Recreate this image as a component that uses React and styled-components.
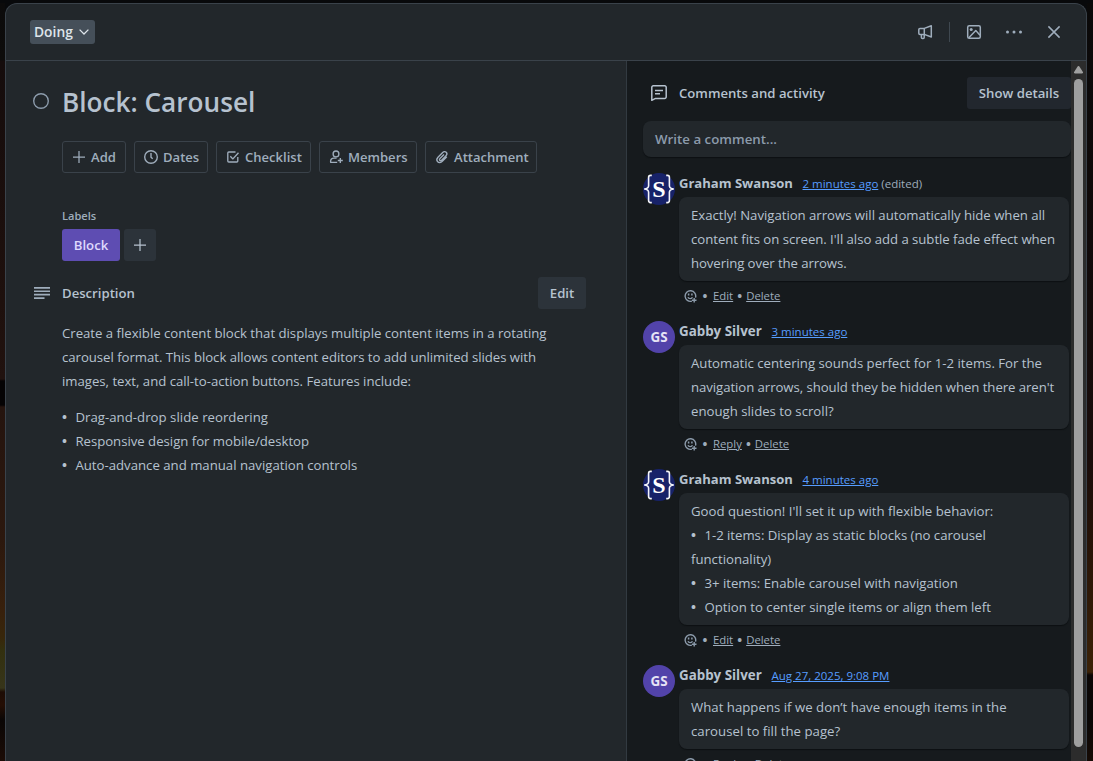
import React from "react";
import styled, { createGlobalStyle } from "styled-components";

const c = {
  surface: "#22272b",
  sunken: "#161a1d",
  border: "#3a424a",
  text: "#b6c2cf",
  subtle: "#9fadbc",
  muted: "#8c9bab",
  button: "#2c333a",
  link: "#579dff",
};

const GlobalStyle = createGlobalStyle`
  * { box-sizing: border-box; }
  body {
    margin: 0;
    overflow: hidden;
    color: ${c.text};
    font: 400 13.2px/20px "Open Sans", "Noto Sans", sans-serif;
  }
  svg { display: block; flex: none; }
`;

const Board = styled.div`
  height: 761px;
  padding: 3px 6px 0 5px;
  background:
    linear-gradient(#08090b, #08090b) 0 0 / 100% 3px no-repeat,
    linear-gradient(#0c0b0b 0, #0d0c0b 60px, #150c0c 61px, #1e100d 300px, #21120f 379px, #050304 381px, #050304 405px, #25140e 407px, #2c180e 540px, #38200c 610px, #38270b 638px, #33300f 650px, #37351a 688px, #1d0c05 692px, #250e04 705px, #0a0605 720px, #1c0c06 761px) 0 0 / 5px 100% no-repeat,
    linear-gradient(#0a0909 0, #0c0a0a 60px, #0f0909 180px, #130b0b 300px, #1a0c0a 460px, #2a1507 560px, #3c2207 672px, #0b0605 675px, #0a0605 720px, #160b05 761px) 100% 0 / 6px 100% no-repeat,
    #08090b;
`;

const Modal = styled.section`
  display: flex;
  flex-direction: column;
  height: 758px;
  overflow: hidden;
  border: 1px solid ${c.border};
  border-bottom: 0;
  border-radius: 12px 12px 0 0;
  background: ${c.surface};
`;

const Header = styled.header`
  display: flex;
  flex: none;
  align-items: center;
  justify-content: space-between;
  height: 57px;
  padding: 0 12px 0 24px;
  border-bottom: 1px solid ${c.border};
`;

const ListButton = styled.button`
  display: flex;
  align-items: center;
  gap: 6px;
  width: 65px;
  height: 24px;
  padding: 0 5px 0 4px;
  border: 0;
  border-radius: 3px;
  background: #454f59;
  color: #dee4ea;
  font: 600 13.8px/20px "Open Sans", sans-serif;
`;

const HeaderActions = styled.div`
  display: flex;
  align-items: center;
  color: ${c.subtle};
`;

const IconButton = styled.button`
  display: grid;
  place-items: center;
  width: ${(p) => p.$w || 40}px;
  height: 32px;
  padding: 0;
  border: 0;
  background: none;
  color: inherit;
`;

const Divider = styled.span`
  width: 1px;
  height: 20px;
  margin-right: 4px;
  background: #3f4850;
`;

const Columns = styled.div`
  display: flex;
  flex: 1;
  min-height: 0;
`;

const Main = styled.main`
  flex: none;
  width: 621px;
  padding: 25px 40px 0 26px;
  border-right: 1px solid #323a41;
`;

const IconRow = styled.div`
  display: grid;
  grid-template-columns: 18px 1fr auto;
  column-gap: 12px;
  align-items: center;
`;

const Indented = styled.div`
  padding-left: 30px;
`;

const Title = styled.h1`
  margin: 0;
  font-size: 26.2px;
  font-weight: 600;
  line-height: 32px;
`;

const ButtonRow = styled.div`
  display: flex;
  gap: 8px;
  margin-top: 23px;
`;

const OutlineButton = styled.button`
  display: flex;
  align-items: center;
  gap: ${(p) => p.$gap || 4}px;
  width: ${(p) => p.$w}px;
  height: 32px;
  padding: 0 0 0 8px;
  border: 1px solid ${c.border};
  border-radius: 3px;
  background: none;
  color: ${c.subtle};
  font: 600 13.05px/20px "Open Sans", sans-serif;
  white-space: nowrap;
`;

const LabelsHeading = styled.h2`
  margin: 35px 0 5px;
  color: ${c.subtle};
  font-size: 11.1px;
  font-weight: 600;
  line-height: 16px;
`;

const Labels = styled.div`
  display: flex;
  gap: 4px;
  margin-bottom: 16px;
`;

const Label = styled.span`
  width: 58px;
  border-radius: 3px;
  background: #5e4db2;
  color: #dfd8fd;
  font-weight: 600;
  line-height: 32px;
  text-align: center;
`;

const SolidButton = styled.button`
  display: grid;
  place-items: center;
  width: ${(p) => p.$w}px;
  height: 32px;
  padding: 0;
  border: 0;
  border-radius: 3px;
  background: ${(p) => p.$bg || c.button};
  color: ${c.text};
  font: 600 13.2px/20px "Open Sans", sans-serif;
`;

const SectionTitle = styled.h2`
  margin: 0;
  font-size: 13.15px;
  font-weight: 600;
  line-height: 20px;
`;

const Copy = styled.div`
  margin-top: 12px;
  line-height: 24px;
`;

const Line = styled.span`
  display: block;
  letter-spacing: ${(p) => p.$ls || 0}px;
  white-space: nowrap;
`;

const Bullet = styled(Line)`
  &::before {
    content: "•";
    display: inline-block;
    width: 13.4px;
    font-weight: 700;
    letter-spacing: 0;
  }
`;

const Side = styled.aside`
  flex: 1;
  min-width: 0;
  padding: 16px 0 0 16px;
  overflow: hidden;
  background: ${c.sunken};
`;

const SideHeader = styled(IconRow)`
  grid-template-columns: 16px 1fr auto;
  padding-left: 8px;
`;

const CommentInput = styled.div`
  height: 36px;
  margin: 12px 0 16px;
  padding: 8px 12px;
  border-radius: 8px;
  background: ${c.surface};
  box-shadow: 0 1px 1px #0d1013;
  color: ${c.muted};
  font-size: 13.3px;
  font-weight: 600;
`;

const Comment = styled.article`
  display: grid;
  grid-template-columns: 32px 390px;
  column-gap: 4px;
`;

const Initials = styled.span`
  width: 32px;
  height: 32px;
  border-radius: 50%;
  background: #5243aa;
  color: #e6e3f5;
  font-size: 13.4px;
  font-weight: 700;
  line-height: 32px;
  text-align: center;
`;

const Byline = styled.div`
  display: flex;
  align-items: baseline;
  height: 24px;
  color: ${c.subtle};
  font-size: 11.5px;
  white-space: pre;
`;

const Author = styled.strong`
  width: ${(p) => p.$w}px;
  color: ${c.text};
  font-size: ${(p) => p.$size}px;
  font-weight: 700;
`;

const TimeLink = styled.a`
  margin-right: 3px;
  color: ${c.link};
  text-decoration: underline;
`;

const Bubble = styled.div`
  padding: 6px 12px;
  border-radius: 8px;
  background: ${c.surface};
  box-shadow: 0 1px 1px #0d1013;
  line-height: 24px;
`;

const Actions = styled.div`
  display: flex;
  align-items: center;
  height: 20px;
  margin: 5px 0 15px;
  padding-left: 5px;
  color: ${c.subtle};
  font-size: 11.35px;
`;

const Dot = styled.span`
  width: ${(p) => p.$w}px;
  font-size: 13px;
  font-weight: 700;
  text-align: center;
`;

const ActionLink = styled.a`
  color: ${c.subtle};
  text-decoration: underline;
`;

const Scrollbar = styled.div`
  display: flex;
  flex: none;
  flex-direction: column;
  align-items: center;
  width: 15px;
  padding-top: 5px;
  background: #2c2c2c;
`;

const Thumb = styled.div`
  width: 9px;
  height: 668px;
  margin-top: 5px;
  border-radius: 5px;
  background: #9f9f9f;
`;

const Icon = ({ size = 16, w = 1.5, children }) => (
  <svg width={size} height={size} viewBox="0 0 16 16" fill="none" stroke="currentColor" strokeWidth={w} strokeLinejoin="round">
    {children}
  </svg>
);

const PlusIcon = () => <Icon w={1.25}><path d="M8 2v12M2 8h12" /></Icon>;
const ClockIcon = () => <Icon w={1.4}><circle cx="8" cy="8" r="6.3" /><path d="M8 4v4.2l1.7 1.6" /></Icon>;
const CheckIcon = () => (
  <Icon w={1.35}><path d="M10.5 3H3.8a1 1 0 0 0-1 1v8a1 1 0 0 0 1 1h8a1 1 0 0 0 1-1V8M5.3 7.3l2.6 2.6 5.6-6.2" /></Icon>
);
const MemberIcon = () => (
  <Icon w={1.35}><circle cx="8" cy="4.9" r="2.9" /><path d="M9.2 13.3H2.6v-.8c0-2.1 1.5-3.4 3.4-3.4h2.6M12.3 9v5M9.8 11.5h5" /></Icon>
);
const ClipIcon = () => (
  <Icon w={1.35}><path d="m12.8 7.8-4.5 4.6c-1.4 1.4-3.4 1.6-4.6.4-1.2-1.2-1-3.1.3-4.5l4.7-4.8c1-1 2.6-1.1 3.5-.2.9.9.8 2.4-.2 3.4l-4.4 4.5c-.6.6-1.3.7-1.8.2s-.4-1.2.2-1.8l4-4.1" /></Icon>
);

const Megaphone = () => (
  <Icon w={1.5}><path d="M7.3 4.4 14.3 1.8v11.2L7.3 10.4ZM7.3 4.4H3a1.2 1.2 0 0 0-1.2 1.2v3.6A1.2 1.2 0 0 0 3 10.4h4.3M4.4 10.4v3c0 .6.4 1 1 1h.8c.6 0 1-.4 1-1v-3" /></Icon>
);
const ImageIcon = () => (
  <Icon w={1.5}><rect x="1.7" y="1.7" width="12.6" height="12.6" rx="1.5" /><circle cx="5.2" cy="5.4" r="1.5" fill="currentColor" stroke="none" /><path d="m2.8 13.8 7-7.2 4.2 4.6" /></Icon>
);
const MoreIcon = () => (
  <Icon w={0}><g fill="currentColor"><circle cx="1.5" cy="8" r="1.5" /><circle cx="8" cy="8" r="1.5" /><circle cx="14.5" cy="8" r="1.5" /></g></Icon>
);
const CloseIcon = () => <Icon><path d="m2.4 2.4 11.2 11.2M13.6 2.4 2.4 13.6" /></Icon>;
const CommentIcon = () => (
  <Icon w={1.5}><path d="M.8 15.3V2.3A1.5 1.5 0 0 1 2.3.8h11.4a1.5 1.5 0 0 1 1.5 1.5v9.6a1.5 1.5 0 0 1-1.5 1.5H4.5ZM4 5.6h8M4 8.8h5" /></Icon>
);
const LinesIcon = () => (
  <svg width="18" height="12" viewBox="0 0 18 12" fill={c.subtle}>
    <path d="M2 0h16v1.7H2zM2 3.4h16v1.7H2zM2 6.8h16v1.7H2zM2 10.2h10.5v1.7H2z" />
  </svg>
);
const ReactIcon = () => (
  <svg width="13" height="13" viewBox="0 0 13 13" fill="none" stroke={c.muted} strokeWidth="1.4">
    <path d="M11.5 7.6A5.3 5.3 0 1 0 7.8 11.2M4 7.3c.6 1.8 3.8 1.8 4.4 0M10.2 7.9v4.6M7.9 10.2h4.6" />
    <path d="M4.6 3.6v1.9M7.9 3.6v1.9" strokeWidth="1.5" />
  </svg>
);

const LogoAvatar = () => (
  <svg width="32" height="32" viewBox="0 0 32 32">
    <circle cx="16" cy="16" r="16" fill="#172269" />
    <g fill="none" stroke="#f4f5fa" strokeWidth="1.6">
      <path d="M8.8 2.4H7.6C6.2 2.4 5.6 3 5.6 4.4v8.4c0 1.8-1.2 2.9-4.4 3.2 3.2.3 4.4 1.4 4.4 3.2v8.4c0 1.4.6 2 2 2h1.2" />
      <path d="M23.2 2.4h1.2c1.4 0 2 .6 2 2v8.4c0 1.8 1.2 2.9 4.4 3.2-3.2.3-4.4 1.4-4.4 3.2v8.4c0 1.4-.6 2-2 2h-1.2" />
    </g>
    <text x="16" y="24" fill="#fff" fontFamily="Liberation Serif, serif" fontSize="24" fontWeight="700" textAnchor="middle">S</text>
  </svg>
);

const comments = [
  {
    me: true, time: "2 minutes ago", edited: true,
    lines: [
      ["Exactly! Navigation arrows will automatically hide when all", -0.025],
      ["content fits on screen. I'll also add a subtle fade effect when", -0.04],
      ["hovering over the arrows.", -0.09],
    ],
  },
  {
    time: "3 minutes ago",
    lines: [
      ["Automatic centering sounds perfect for 1-2 items. For the", -0.01],
      ["navigation arrows, should they be hidden when there aren't", -0.065],
      ["enough slides to scroll?", 0],
    ],
  },
  {
    me: true, time: "4 minutes ago",
    lines: [
      ["Good question! I'll set it up with flexible behavior:", 0],
      ["1-2 items: Display as static blocks (no carousel", -0.02, true],
      ["functionality)", 0],
      ["3+ items: Enable carousel with navigation", 0, true],
      ["Option to center single items or align them left", 0.01, true],
    ],
  },
  {
    time: "Aug 27, 2025, 9:08 PM",
    lines: [
      ["What happens if we don’t have enough items in the", 0.02],
      ["carousel to fill the page?", 0.02],
    ],
  },
];

const CommentItem = ({ me, time, edited, lines }) => (
  <Comment>
    {me ? <LogoAvatar /> : <Initials>GS</Initials>}
    <div>
      <Byline>
        <Author $w={me ? 123.5 : 92.5} $size={me ? 13.06 : 13.35}>{me ? "Graham Swanson" : "Gabby Silver"}</Author>
        <TimeLink>{time}</TimeLink>
        {edited && <span>(edited)</span>}
      </Byline>
      <Bubble>
        {lines.map(([text, ls, bullet]) =>
          bullet ? <Bullet key={text} $ls={ls}>{text}</Bullet> : <Line key={text} $ls={ls}>{text}</Line>
        )}
      </Bubble>
      <Actions>
        <ReactIcon />
        <Dot $w={16}>•</Dot>
        <ActionLink>{me ? "Edit" : "Reply"}</ActionLink>
        <Dot $w={13}>•</Dot>
        <ActionLink>Delete</ActionLink>
      </Actions>
    </div>
  </Comment>
);

export default function App() {
  return (
    <Board>
      <GlobalStyle />
      <Modal>
        <Header>
          <ListButton>
            Doing
            <svg width="10" height="6" viewBox="0 0 10 6" fill="none" stroke="currentColor" strokeWidth="1.3">
              <path d="m.6.6 4.4 4.4L9.4.6" />
            </svg>
          </ListButton>
          <HeaderActions>
            <IconButton $w={48}><Megaphone /></IconButton>
            <Divider />
            <IconButton><ImageIcon /></IconButton>
            <IconButton><MoreIcon /></IconButton>
            <IconButton><CloseIcon /></IconButton>
          </HeaderActions>
        </Header>
        <Columns>
          <Main>
            <IconRow>
              <svg width="18" height="18" viewBox="0 0 18 18" fill="none" stroke={c.muted} strokeWidth="1.4">
                <circle cx="9" cy="8" r="7.3" />
              </svg>
              <Title>Block: Carousel</Title>
            </IconRow>
            <Indented>
              <ButtonRow>
                <OutlineButton $w={64}><PlusIcon />Add</OutlineButton>
                <OutlineButton $w={74}><ClockIcon />Dates</OutlineButton>
                <OutlineButton $w={95}><CheckIcon />Checklist</OutlineButton>
                <OutlineButton $w={98}><MemberIcon />Members</OutlineButton>
                <OutlineButton $w={112}><ClipIcon />Attachment</OutlineButton>
              </ButtonRow>
              <LabelsHeading>Labels</LabelsHeading>
              <Labels>
                <Label>Block</Label>
                <SolidButton $w={32}><PlusIcon /></SolidButton>
              </Labels>
            </Indented>
            <IconRow>
              <LinesIcon />
              <SectionTitle>Description</SectionTitle>
              <SolidButton $w={48}>Edit</SolidButton>
            </IconRow>
            <Indented>
              <Copy>
                <Line $ls={-0.02}>Create a flexible content block that displays multiple content items in a rotating</Line>
                <Line $ls={-0.04}>carousel format. This block allows content editors to add unlimited slides with</Line>
                <Line $ls={-0.02}>images, text, and call-to-action buttons. Features include:</Line>
              </Copy>
              <Copy>
                <Bullet $ls={0.03}>Drag-and-drop slide reordering</Bullet>
                <Bullet $ls={-0.02}>Responsive design for mobile/desktop</Bullet>
                <Bullet>Auto-advance and manual navigation controls</Bullet>
              </Copy>
            </Indented>
          </Main>
          <Side>
            <SideHeader>
              <CommentIcon />
              <SectionTitle>Comments and activity</SectionTitle>
              <SolidButton $w={104} $bg="#22272e">Show details</SolidButton>
            </SideHeader>
            <CommentInput>Write a comment...</CommentInput>
            {comments.map((item) => <CommentItem key={item.time} {...item} />)}
          </Side>
          <Scrollbar>
            <svg width="9" height="8" viewBox="0 0 9 8" fill="#9f9f9f">
              <path d="M3.6.6a1.1 1.1 0 0 1 1.8 0L8.9 6a1 1 0 0 1-.9 1.5H1A1 1 0 0 1 .1 6Z" />
            </svg>
            <Thumb />
          </Scrollbar>
        </Columns>
      </Modal>
    </Board>
  );
}
